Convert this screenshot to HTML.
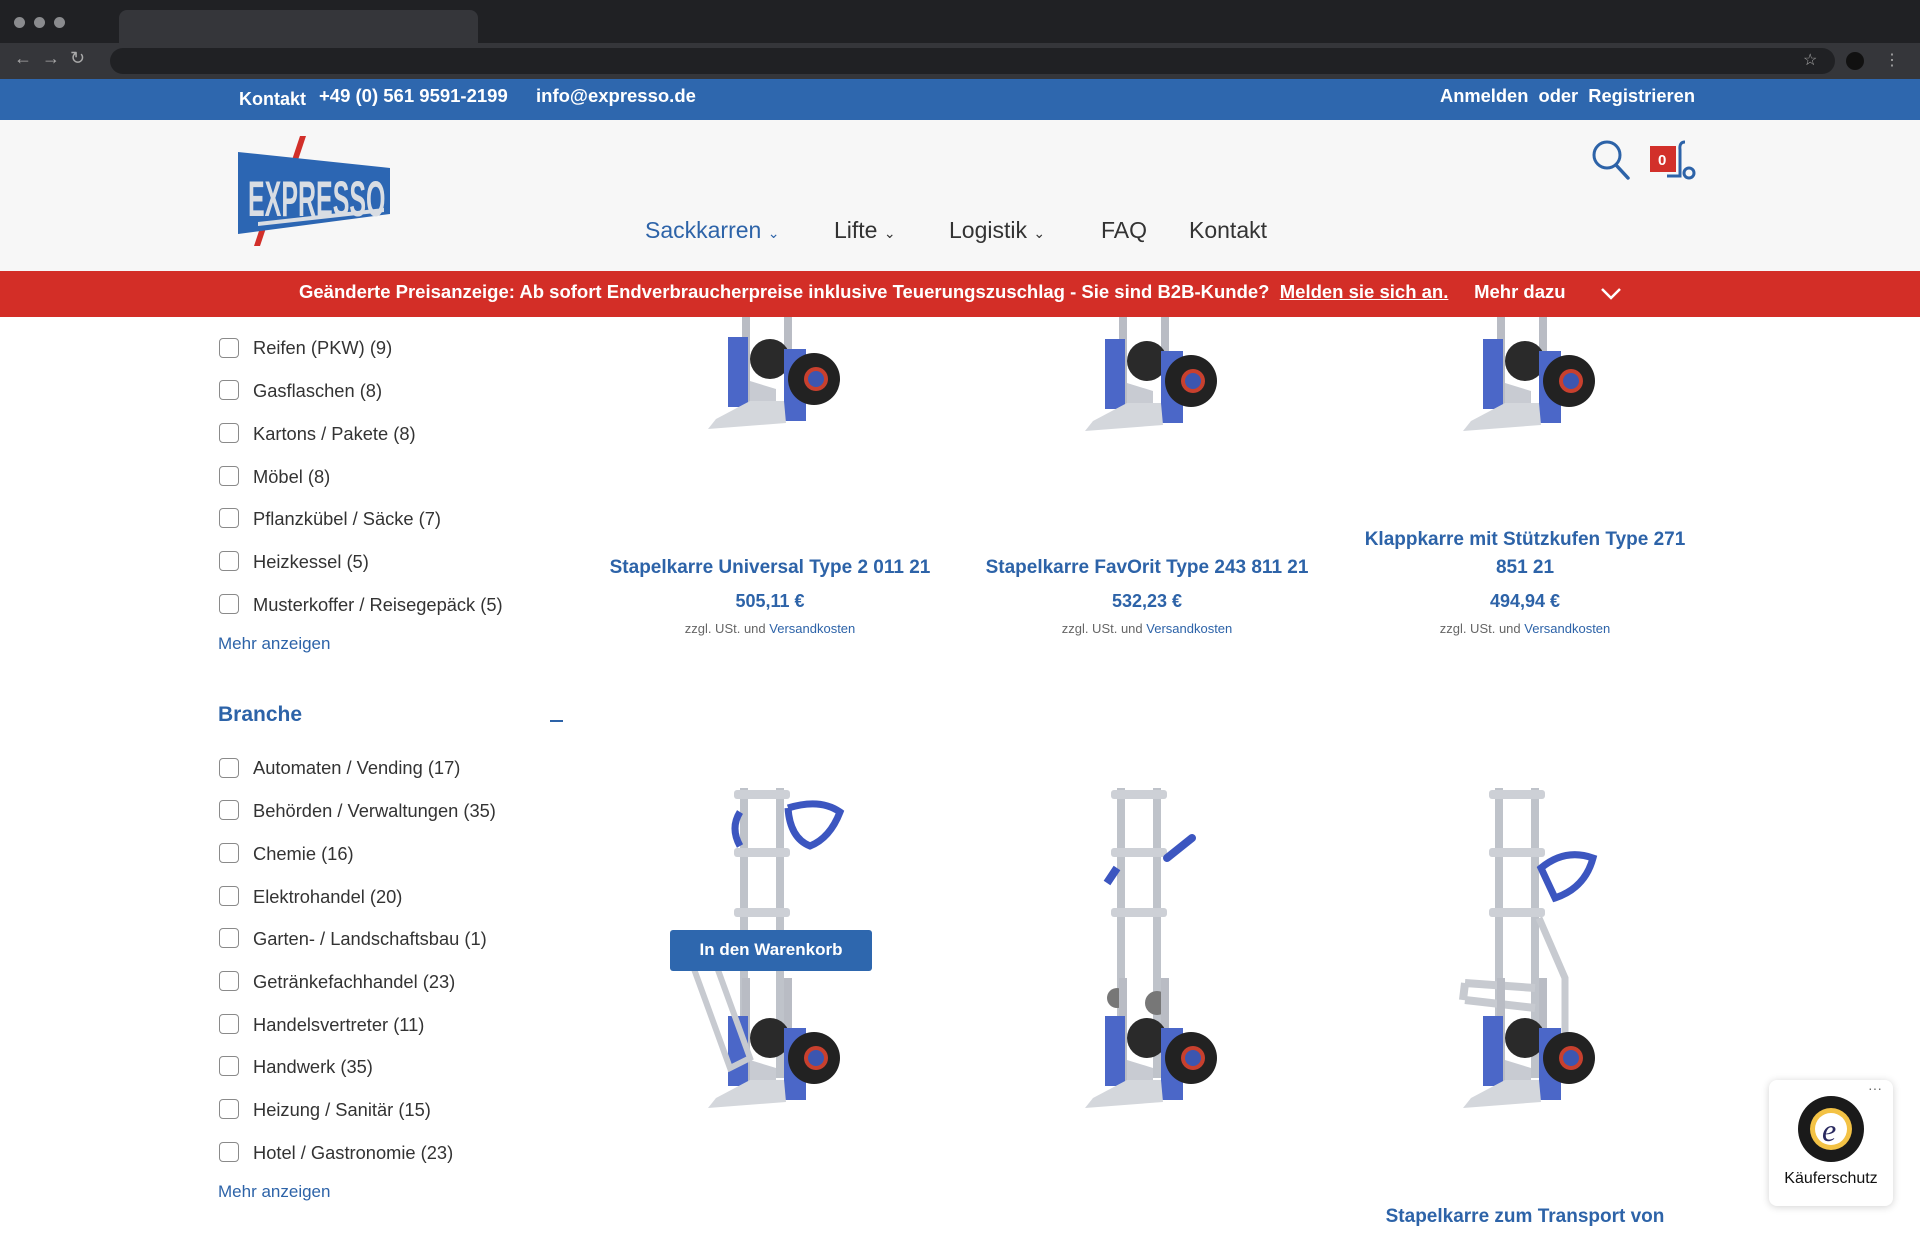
<!DOCTYPE html>
<html><head><meta charset="utf-8">
<style>
*{margin:0;padding:0;box-sizing:border-box}
body{width:1920px;height:1236px;overflow:hidden;background:#fff;font-family:"Liberation Sans",Arial,sans-serif;position:relative}
.a{position:absolute;white-space:nowrap}
.cb{position:absolute;left:219px;width:20px;height:20px;border:1.5px solid #8a8a8a;border-radius:4px;background:#fff}
.lb{position:absolute;left:253px;font-size:18.3px;color:#333;white-space:nowrap}
.t{position:absolute;width:380px;text-align:center;font-size:19px;font-weight:bold;color:#2d63a8;line-height:28px}
.pr{position:absolute;width:380px;text-align:center;font-size:18px;font-weight:bold;color:#2d63a8}
.z{position:absolute;width:380px;text-align:center;font-size:13px;color:#666}
.z span{color:#2d63a8}
</style></head><body>
<div class="a" style="left:0;top:0;width:1920px;height:43px;background:#202124"></div>
<div class="a" style="left:119px;top:10px;width:359px;height:34px;background:#35363a;border-radius:8px 8px 0 0"></div>
<div class="a" style="left:14px;top:17px;width:11px;height:11px;border-radius:50%;background:#8a8b8e"></div>
<div class="a" style="left:34px;top:17px;width:11px;height:11px;border-radius:50%;background:#8a8b8e"></div>
<div class="a" style="left:54px;top:17px;width:11px;height:11px;border-radius:50%;background:#8a8b8e"></div>
<div class="a" style="left:0;top:43px;width:1920px;height:36px;background:#35363a"></div>
<div class="a" style="left:110px;top:48px;width:1725px;height:26px;background:#202124;border-radius:13px"></div>
<div class="a" style="left:14px;top:48px;color:#aaa;font-size:18px">←&nbsp;&nbsp;→&nbsp;&nbsp;↻</div>
<div class="a" style="left:1803px;top:50px;color:#aaa;font-size:16px">☆</div>
<div class="a" style="left:1846px;top:52px;width:18px;height:18px;border-radius:50%;background:#111"></div>
<div class="a" style="left:1884px;top:50px;color:#aaa;font-size:16px">⋮</div>
<div class="a" style="left:0;top:79px;width:1920px;height:41px;background:#2e67ae"></div>
<div class="a" style="left:239px;top:89px;color:#fff;font-size:18px;font-weight:bold">Kontakt</div>
<div class="a" style="left:319px;top:85px;color:#fff;font-size:18.5px;font-weight:bold">+49 (0) 561 9591-2199</div>
<div class="a" style="left:536px;top:85px;color:#fff;font-size:18.5px;font-weight:bold">info@expresso.de</div>
<div class="a" style="left:1440px;top:85px;color:#fff;font-size:18.3px;font-weight:bold">Anmelden&nbsp; oder&nbsp; Registrieren</div>
<div class="a" style="left:0;top:120px;width:1920px;height:151px;background:#f7f7f7"></div>
<svg class="a" style="left:234px;top:136px" width="160" height="112" viewBox="0 0 160 112">
<polygon points="66,0 72,0 62,30 56,30" fill="#d2302a"/>
<polygon points="30,80 36,80 26,110 20,110" fill="#d2302a"/>
<polygon points="4,16 156,32 156,78 4,98" fill="#2c66b3"/>
<g transform="scale(0.5,1)"><text x="28" y="80" font-family="Liberation Sans" font-weight="bold" font-size="50" fill="#d9dde3">EXPRESSO</text></g>
<polygon points="24,86 150,72 150,76 24,90" fill="#d9dde3"/>
</svg>
<div class="a" style="left:645px;top:217px;color:#2d63a8;font-size:23px">Sackkarren <span style="font-size:14px">⌄</span></div>
<div class="a" style="left:834px;top:217px;color:#333;font-size:23px">Lifte <span style="font-size:14px">⌄</span></div>
<div class="a" style="left:949px;top:217px;color:#333;font-size:23px">Logistik <span style="font-size:14px">⌄</span></div>
<div class="a" style="left:1101px;top:217px;color:#333;font-size:23px">FAQ</div>
<div class="a" style="left:1189px;top:217px;color:#333;font-size:23px">Kontakt</div>
<svg class="a" style="left:1590px;top:138px" width="44" height="44" viewBox="0 0 44 44"><circle cx="17" cy="17" r="13" fill="none" stroke="#2d63a8" stroke-width="3"/><line x1="26" y1="27" x2="38" y2="40" stroke="#2d63a8" stroke-width="3.5" stroke-linecap="round"/></svg>
<svg class="a" style="left:1649px;top:138px" width="50" height="44" viewBox="0 0 50 44"><path d="M36 4 Q30 4 31 12 L31 38 L18 38" fill="none" stroke="#2d63a8" stroke-width="3"/><circle cx="40" cy="35" r="5" fill="none" stroke="#2d63a8" stroke-width="3"/><rect x="1" y="8" width="26" height="26" fill="#d2302a"/><text x="9" y="27" font-family="Liberation Sans" font-size="15" font-weight="bold" fill="#fff">0</text></svg>
<div class="a" style="left:0;top:271px;width:1920px;height:46px;background:#d32e27"></div>
<div class="a" style="left:299px;top:281px;color:#fff;font-size:18.5px;font-weight:bold">Geänderte Preisanzeige: Ab sofort Endverbraucherpreise inklusive Teuerungszuschlag - Sie sind B2B-Kunde?&nbsp; <u>Melden sie sich an.</u>&nbsp;&nbsp;&nbsp;&nbsp; Mehr dazu</div>
<svg class="a" style="left:1600px;top:287px" width="22" height="14"><polyline points="2,2 11,11 20,2" fill="none" stroke="#fff" stroke-width="2.5"/></svg>

<div class="cb" style="top:338px"></div><div class="lb" style="top:337px">Reifen (PKW) (9)</div>
<div class="cb" style="top:380px"></div><div class="lb" style="top:380px">Gasflaschen (8)</div>
<div class="cb" style="top:423px"></div><div class="lb" style="top:423px">Kartons / Pakete (8)</div>
<div class="cb" style="top:466px"></div><div class="lb" style="top:466px">Möbel (8)</div>
<div class="cb" style="top:508px"></div><div class="lb" style="top:508px">Pflanzkübel / Säcke (7)</div>
<div class="cb" style="top:551px"></div><div class="lb" style="top:551px">Heizkessel (5)</div>
<div class="cb" style="top:594px"></div><div class="lb" style="top:594px">Musterkoffer / Reisegepäck (5)</div>
<div class="a" style="left:218px;top:634px;color:#2d63a8;font-size:17px">Mehr anzeigen</div>
<div class="a" style="left:218px;top:703px;color:#2d63a8;font-size:21px;font-weight:bold">Branche</div>
<div class="a" style="left:550px;top:720px;width:13px;height:2px;background:#2d63a8"></div>
<div class="cb" style="top:758px"></div><div class="lb" style="top:757px">Automaten / Vending (17)</div>
<div class="cb" style="top:800px"></div><div class="lb" style="top:800px">Behörden / Verwaltungen (35)</div>
<div class="cb" style="top:843px"></div><div class="lb" style="top:843px">Chemie (16)</div>
<div class="cb" style="top:886px"></div><div class="lb" style="top:886px">Elektrohandel (20)</div>
<div class="cb" style="top:928px"></div><div class="lb" style="top:928px">Garten- / Landschaftsbau (1)</div>
<div class="cb" style="top:971px"></div><div class="lb" style="top:971px">Getränkefachhandel (23)</div>
<div class="cb" style="top:1014px"></div><div class="lb" style="top:1014px">Handelsvertreter (11)</div>
<div class="cb" style="top:1056px"></div><div class="lb" style="top:1056px">Handwerk (35)</div>
<div class="cb" style="top:1099px"></div><div class="lb" style="top:1099px">Heizung / Sanitär (15)</div>
<div class="cb" style="top:1142px"></div><div class="lb" style="top:1142px">Hotel / Gastronomie (23)</div>
<div class="a" style="left:218px;top:1182px;color:#2d63a8;font-size:17px">Mehr anzeigen</div>

<svg class="a" style="left:580px;top:317px" width="1340" height="919" viewBox="580 317 1340 919">
<defs>
<g id="low">
<rect x="-28" y="-130" width="8" height="110" fill="#b9bcc4"/>
<rect x="14" y="-130" width="8" height="110" fill="#b9bcc4"/>
<circle cx="0" cy="-70" r="20" fill="#2a2a2a"/>
<polygon points="-20,-48 6,-40 6,-20 -20,-28" fill="#c8cbd2"/>
<rect x="-42" y="-92" width="20" height="70" fill="#4b67c8"/>
<rect x="14" y="-80" width="22" height="72" fill="#4b67c8"/>
<circle cx="44" cy="-50" r="26" fill="#222"/>
<circle cx="46" cy="-50" r="12" fill="#c8402e"/>
<circle cx="46" cy="-50" r="8" fill="#3c56b0"/>
<polygon points="-20,-28 14,-28 16,-6 -62,0 -54,-10" fill="#d4d7dc"/>
</g>
<g id="tall">
<rect x="-30" y="-320" width="8" height="290" fill="#bfc3ca"/>
<rect x="6" y="-320" width="8" height="290" fill="#bfc3ca"/>
<rect x="-36" y="-318" width="56" height="9" rx="3" fill="#cdd0d6"/>
<rect x="-36" y="-260" width="56" height="9" rx="3" fill="#cdd0d6"/>
<rect x="-36" y="-200" width="56" height="9" rx="3" fill="#cdd0d6"/>
</g>
</defs>
<use href="#low" x="770" y="429"/>
<use href="#low" x="1147" y="431"/>
<use href="#low" x="1525" y="431"/>
<g transform="translate(770,1108)"><use href="#tall"/>
<path d="M-30 -296 Q-40 -280 -30 -262 M18 -300 Q50 -310 70 -296 Q60 -270 40 -262 Q20 -270 18 -300" fill="none" stroke="#3c56c0" stroke-width="7"/>
<use href="#low"/>
<polygon points="-80,-150 -60,-160 -20,-50 -40,-40" fill="none" stroke="#c7cad0" stroke-width="6"/>
</g>
<g transform="translate(1147,1108)"><use href="#tall"/>
<path d="M20 -250 L45 -270" stroke="#3c56c0" stroke-width="8" stroke-linecap="round"/>
<path d="M-30 -240 L-40 -225" stroke="#3c56c0" stroke-width="8"/>
<circle cx="-30" cy="-110" r="10" fill="#777"/><circle cx="10" cy="-105" r="12" fill="#777"/>
<use href="#low"/></g>
<g transform="translate(1525,1108)"><use href="#tall"/>
<path d="M16 -240 Q40 -260 68 -250 Q60 -220 30 -210 Z" fill="none" stroke="#3c56c0" stroke-width="7"/>
<path d="M-60 -125 L10 -120 M-60 -108 L10 -100 M-60 -125 L-62 -108" stroke="#c7cad0" stroke-width="8" fill="none"/>
<path d="M14 -190 L40 -130 L40 -60" stroke="#c7cad0" stroke-width="7" fill="none"/>
<use href="#low"/></g>
</svg>
<div class="a" style="left:670px;top:930px;width:202px;height:41px;background:#2e67ae;border-radius:3px;color:#fff;font-size:17px;font-weight:bold;text-align:center;line-height:39px">In den Warenkorb</div>

<div class="t" style="left:580px;top:554px">Stapelkarre Universal Type 2 011 21</div>
<div class="pr" style="left:580px;top:591px">505,11 €</div>
<div class="z" style="left:580px;top:621px">zzgl. USt. und <span>Versandkosten</span></div>
<div class="t" style="left:957px;top:554px">Stapelkarre FavOrit Type 243 811 21</div>
<div class="pr" style="left:957px;top:591px">532,23 €</div>
<div class="z" style="left:957px;top:621px">zzgl. USt. und <span>Versandkosten</span></div>
<div class="t" style="left:1335px;top:526px">Klappkarre mit Stützkufen Type 271<br>851 21</div>
<div class="pr" style="left:1335px;top:591px">494,94 €</div>
<div class="z" style="left:1335px;top:621px">zzgl. USt. und <span>Versandkosten</span></div>
<div class="t" style="left:1335px;top:1203px">Stapelkarre zum Transport von</div>

<div class="a" style="left:1769px;top:1080px;width:124px;height:126px;background:#fff;border-radius:8px;box-shadow:0 1px 8px rgba(0,0,0,.18)"></div>
<div class="a" style="left:1868px;top:1080px;color:#666;font-size:14px">···</div>
<svg class="a" style="left:1797px;top:1095px" width="68" height="68" viewBox="0 0 68 68"><circle cx="34" cy="34" r="33" fill="#1a1a1a"/><circle cx="34" cy="34" r="21" fill="#f3c245"/><circle cx="34" cy="34" r="16" fill="#fff"/><text x="25" y="46" font-family="Liberation Serif" font-style="italic" font-size="32" fill="#2a2a60">e</text></svg>
<div class="a" style="left:1769px;top:1170px;width:124px;text-align:center;color:#111;font-size:16px">Käuferschutz</div>
</body></html>
